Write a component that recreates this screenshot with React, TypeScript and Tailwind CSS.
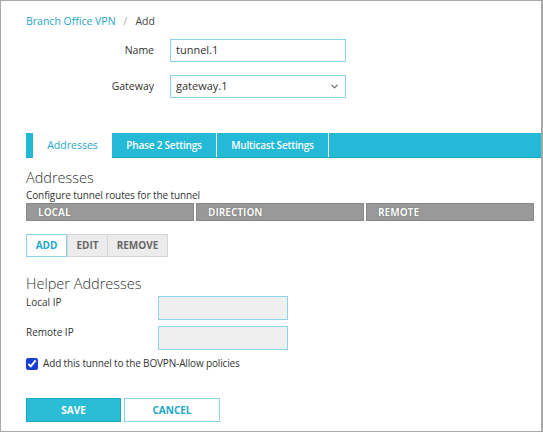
import { ChevronDown } from "lucide-react"

const tabs = [
  { label: "Addresses", w: "w-[79px]", active: true },
  { label: "Phase 2 Settings", w: "w-[105px]", active: false },
  { label: "Multicast Settings", w: "w-[112px]", active: false },
]

const cols = ["LOCAL", "DIRECTION", "REMOTE"]

export default function App() {
  return (
    <div className="h-[432px] w-[543px] overflow-hidden border border-r-2 border-[#a8a8a8] bg-white font-['Open_Sans',sans-serif] text-[#333]">
      <div className="pl-[25px] pt-[13px]">
        {/* breadcrumb */}
        <div className="flex h-[14px] items-center text-[10.5px] leading-[14px]">
          <span className="text-[#1ea7c9]">Branch Office VPN</span>
          <span className="mx-[8px] text-[#aaa]">/</span>
          <span className="text-[#444]">Add</span>
        </div>

        {/* name / gateway */}
        <div className="mt-[11px] flex items-center">
          <label className="w-[128px] text-right text-[10.5px]">Name</label>
          <div className="ml-[16px] flex h-[23px] w-[176px] items-center border border-[#8ad6e8] px-[5px] text-[11px]">
            tunnel.1
          </div>
        </div>
        <div className="mt-[13px] flex items-center">
          <label className="w-[128px] text-right text-[10.5px]">Gateway</label>
          <div className="ml-[16px] flex h-[23px] w-[176px] items-center justify-between border border-[#8ad6e8] px-[5px] text-[11px]">
            <span>gateway.1</span>
            <ChevronDown className="h-[11px] w-[11px] text-[#666]" strokeWidth={2.5} />
          </div>
        </div>
      </div>

      {/* tabs */}
      <div className="ml-[25px] mt-[35px] flex h-[25px] items-end border-b border-[#1aa7c4] bg-[#24b9d7] pl-[7px]">
        {tabs.map((t) =>
          t.active ? (
            <div
              key={t.label}
              className={`${t.w} -mb-px flex h-[25px] items-center justify-center bg-white text-[10.5px] text-[#1ea7c9]`}
            >
              {t.label}
            </div>
          ) : (
            <div
              key={t.label}
              className={`${t.w} flex h-full items-center justify-center border-r border-white text-[10px] font-semibold tracking-[-0.2px] text-white`}
            >
              {t.label}
            </div>
          )
        )}
      </div>

      <div className="pl-[25px] pr-[7px]">
        <h2 className="mt-[10px] text-[14.5px] font-light leading-[20px] text-[#333]">Addresses</h2>
        <p className="mt-[1px] text-[10px] leading-[13px] tracking-[-0.1px]">Configure tunnel routes for the tunnel</p>

        {/* table header */}
        <div className="mt-[1px] flex h-[18px] w-[508px] gap-[2px] bg-white">
          {cols.map((c) => (
            <div
              key={c}
              className="flex flex-1 items-center border border-[#888] bg-[#999] pl-[11px] text-[10px] font-bold text-white [text-shadow:0_0_1px_#444]"
            >
              {c}
            </div>
          ))}
        </div>

        {/* add / edit / remove */}
        <div className="mt-[13px] flex h-[23px] text-[10px] font-bold">
          <button className="w-[41px] border border-[#8ad6e8] bg-white text-[#1ea7c9]">ADD</button>
          <button className="w-[41px] border border-[#d6d6d6] bg-[#ececec] text-[#666]">EDIT</button>
          <button className="w-[60px] border border-l-0 border-[#d6d6d6] bg-[#ececec] text-[#666]">REMOVE</button>
        </div>

        <h2 className="mt-[17px] text-[14.5px] font-light leading-[20px] text-[#333]">Helper Addresses</h2>

        <div className="mt-[2px] flex">
          <label className="w-[132px] text-[10px] leading-[12px]">Local IP</label>
          <div className="h-[24px] w-[130px] border border-[#8ad6e8] bg-[#efefef]" />
        </div>
        <div className="mt-[6px] flex">
          <label className="w-[132px] text-[10px] leading-[12px]">Remote IP</label>
          <div className="h-[24px] w-[130px] border border-[#8ad6e8] bg-[#efefef]" />
        </div>

        <label className="mt-[6px] flex items-center gap-[5px] text-[10px] tracking-[-0.15px]">
          <input type="checkbox" defaultChecked className="m-0 h-[12px] w-[12px] accent-[#1a3fd0]" />
          Add this tunnel to the BOVPN-Allow policies
        </label>

        <div className="mt-[27px] flex gap-[3px] text-[10px] font-bold">
          <button className="h-[24px] w-[95px] border border-[#1aa7c4] bg-[#2bbcd6] text-white">SAVE</button>
          <button className="h-[24px] w-[96px] border border-[#8ad6e8] bg-white text-[#1ea7c9]">CANCEL</button>
        </div>
      </div>
    </div>
  )
}
